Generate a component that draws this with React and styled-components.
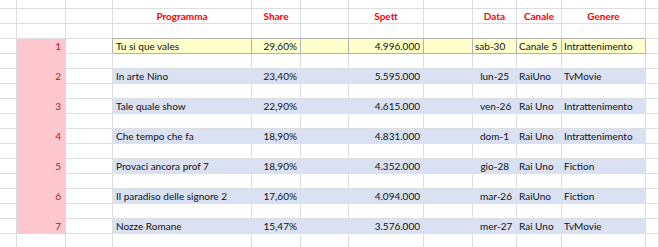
import React from "react";
import styled, { createGlobalStyle } from "styled-components";

const GlobalStyle = createGlobalStyle`
  html, body {
    margin: 0;
    padding: 0;
    background: #ffffff;
  }
  body {
    font-family: Lato, "Liberation Sans", sans-serif;
    overflow: hidden;
  }
`;

// larghezze colonne del foglio (px)
const COLS = [17, 49, 47, 139, 49, 48, 75, 49, 44, 45, 84];

const FILLS = {
  pink: "#ffc7ce",
  blue: "#d9e1f2",
  note: "#ffffcc",
};

const GRID = "#dcdedf";

const lineColor = (fill) => {
  if (!fill) return GRID;
  if (fill === "note") return "#b2b2b2";
  return FILLS[fill];
};

const Sheet = styled.div`
  display: grid;
  grid-template-columns: ${COLS.map((w) => w + "px").join(" ")} 1fr;
  grid-template-rows: 9px;
  grid-auto-rows: 15px;
  width: 659px;
  height: 247px;
  overflow: hidden;
`;

const Cell = styled.div`
  box-sizing: border-box;
  min-width: 0;
  padding: 0 ${(p) => p.$pad || 3}px;
  background: ${(p) => (p.$fill ? FILLS[p.$fill] : "#ffffff")};
  border-right: 1px solid ${(p) => lineColor(p.$fill)};
  border-bottom: 1px solid ${(p) => lineColor(p.$fill)};
  box-shadow: ${(p) => (p.$fill === "note" ? "-1px -1px 0 #b2b2b2" : "none")};
  font-size: 10px;
  line-height: 15px;
  color: ${(p) => (p.$fill === "pink" ? "#b0151f" : "#111111")};
  text-align: ${(p) => p.$align || "left"};
  white-space: nowrap;
  overflow: visible;
`;

const Head = styled(Cell)`
  color: #ff0000;
  font-weight: bold;
  text-align: center;
`;

const shows = [
  { n: 1, title: "Tu sì que vales", share: "29,60%", spett: "4.996.000", data: "sab-30", canale: "Canale 5", genere: "Intrattenimento", fill: "note", dataText: true },
  { n: 2, title: "In arte Nino", share: "23,40%", spett: "5.595.000", data: "lun-25", canale: "RaiUno", genere: "TvMovie", fill: "blue" },
  { n: 3, title: "Tale quale show", share: "22,90%", spett: "4.615.000", data: "ven-26", canale: "Rai Uno", genere: "Intrattenimento", fill: "blue" },
  { n: 4, title: "Che tempo che fa", share: "18,90%", spett: "4.831.000", data: "dom-1", canale: "Rai Uno", genere: "Intrattenimento", fill: "blue" },
  { n: 5, title: "Provaci ancora prof 7", share: "18,90%", spett: "4.352.000", data: "gio-28", canale: "Rai Uno", genere: "Fiction", fill: "blue" },
  { n: 6, title: "Il paradiso delle signore 2", share: "17,60%", spett: "4.094.000", data: "mar-26", canale: "RaiUno", genere: "Fiction", fill: "blue" },
  { n: 7, title: "Nozze Romane", share: "15,47%", spett: "3.576.000", data: "mer-27", canale: "Rai Uno", genere: "TvMovie", fill: "blue" },
];

const EmptyRow = ({ pink }) => (
  <>
    {Array.from({ length: 12 }, (_, i) => (
      <Cell key={i} $fill={pink && i === 1 ? "pink" : undefined} />
    ))}
  </>
);

const HeaderRow = () => (
  <>
    <Cell />
    <Cell />
    <Cell />
    <Head>Programma</Head>
    <Head>Share</Head>
    <Cell />
    <Head>Spett</Head>
    <Cell />
    <Head>Data</Head>
    <Head>Canale</Head>
    <Head>Genere</Head>
    <Cell />
  </>
);

const ShowRow = ({ show }) => {
  const f = show.fill;
  return (
    <>
      <Cell />
      <Cell $fill="pink" $align="right" $pad={4}>
        {show.n}
      </Cell>
      <Cell />
      <Cell $fill={f}>{show.title}</Cell>
      <Cell $fill={f} $align="right">
        {show.share}
      </Cell>
      <Cell $fill={f} />
      <Cell $fill={f} $align="right">
        {show.spett}
      </Cell>
      <Cell $fill={f} />
      <Cell $fill={f} $align={show.dataText ? "left" : "right"} $pad={show.dataText ? 2 : 7}>
        {show.data}
      </Cell>
      <Cell $fill={f} $pad={2}>
        {show.canale}
      </Cell>
      <Cell $fill={f} $pad={2}>
        {show.genere}
      </Cell>
      <Cell />
    </>
  );
};

export default function App() {
  return (
    <>
      <GlobalStyle />
      <Sheet>
        <EmptyRow />
        <HeaderRow />
        <EmptyRow />
        {shows.map((s, i) => (
          <React.Fragment key={s.n}>
            <ShowRow show={s} />
            <EmptyRow pink={i < shows.length - 1} />
          </React.Fragment>
        ))}
      </Sheet>
    </>
  );
}
